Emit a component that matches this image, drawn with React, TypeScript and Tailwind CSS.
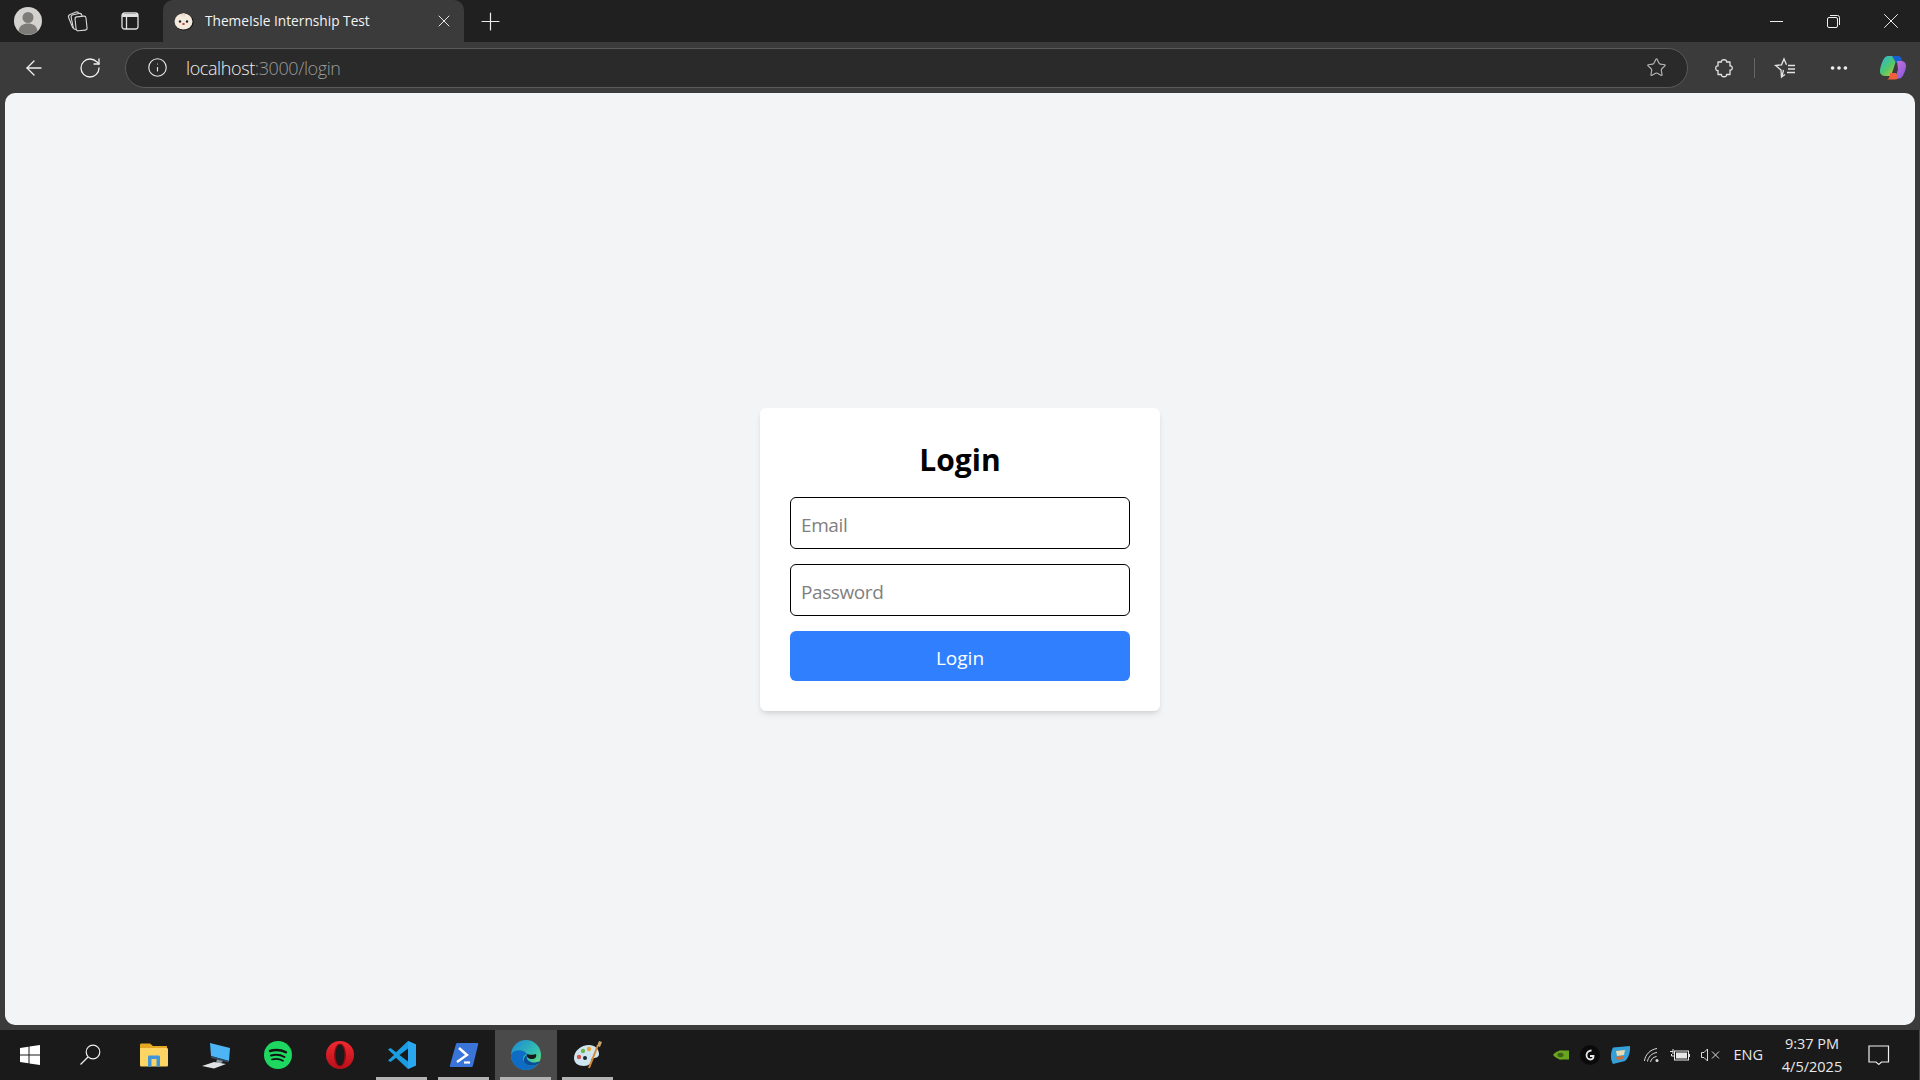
import { ArrowLeft, Ellipsis, Info, Plus, RotateCw, Star, X } from 'lucide-react';

const UI_FONT = "font-['Open_Sans','Noto_Sans',sans-serif]";

const Profile = () => (
  <svg width="28" height="28" viewBox="0 0 28 28">
    <circle cx="14" cy="14" r="14" fill="#d3d2ce" />
    <circle cx="14" cy="10.5" r="5.5" fill="#7d7c79" />
    <path d="M4.5 24c1-5.5 4.5-7.5 9.500-7.500s8.500 2 9.500 7.500a14 14 0 0 1-19 0z" fill="#7d7c79" />
  </svg>
);

const Collections = () => (
  <svg width="22" height="22" viewBox="0 0 22 22" fill="#202020" stroke="#d8d8d8" strokeWidth="1.1">
    <rect x="4" y="3" width="11" height="15" rx="2.500" transform="rotate(-22 9 10)" />
    <rect x="6" y="4" width="11" height="15" rx="2.500" transform="rotate(-12 11 11)" />
    <rect x="9.500" y="6.500" width="11" height="14" rx="2" transform="rotate(-6 15 13)" />
  </svg>
);

const TabsIcon = () => (
  <svg width="18" height="18" viewBox="0 0 18 18" fill="none" stroke="#e0e0e0" strokeWidth="1.300">
    <rect x="1" y="1" width="16" height="16" rx="2.500" />
    <path d="M1 3.500h16" strokeWidth="3" />
    <path d="M5.500 5v12" />
  </svg>
);

const Favicon = () => (
  <svg width="20" height="20" viewBox="0 0 20 20">
    <ellipse cx="10" cy="11" rx="9.500" ry="8.500" fill="#111" />
    <ellipse cx="9.500" cy="10.500" rx="9" ry="8" fill="#f3e9dc" />
    <path d="M7 3.500q2.500-2.500 5 0l-1 2H8z" fill="#e8dccb" />
    <circle cx="6" cy="10.500" r="1.200" fill="#222" />
    <circle cx="13" cy="10.500" r="1.200" fill="#222" />
    <ellipse cx="9.500" cy="13" rx="1.400" ry="1" fill="#c8372f" />
  </svg>
);

const Extensions = () => (
  <svg width="20" height="20" viewBox="0 0 20 20" fill="none" stroke="#e4e4e4" strokeWidth="1.300" strokeLinejoin="round">
    <path d="M7.500 4C6.500 1 13.500 1 12.500 4H16V8C19 7 19 13 16 12V16.500H12.500C13.500 19.500 6.500 19.500 7.500 16.500H4V12.500C1 13.500 1 7 4 8V4Z" />
  </svg>
);

const FavoritesIcon = () => (
  <svg width="22" height="22" viewBox="0 0 22 22" fill="none" stroke="#e4e4e4" strokeWidth="1.300">
    <path d="M9.500 13 8 19.500l-.5.500L7 13 1.500 8.500 7.500 7.800 10 2l2.500 5.800" />
    <path d="M7.500 20l3.500-2.500" />
    <path d="M14 8.500h7M14 12h7M13 15.500h8" />
  </svg>
);

const Copilot = () => (
  <svg width="28" height="28" viewBox="0 0 28 28">
    <defs>
      <linearGradient id="copilot-left" x1="0" y1="0" x2="1" y2="1">
        <stop offset="0" stopColor="#2fb5e8" />
        <stop offset="0.5" stopColor="#4fc86a" />
        <stop offset="1" stopColor="#f2c230" />
      </linearGradient>
      <linearGradient id="copilot-right" x1="0" y1="0" x2="1" y2="1">
        <stop offset="0" stopColor="#d86fd8" />
        <stop offset="1" stopColor="#7a5ae0" />
      </linearGradient>
    </defs>
    <path d="M9 2h11l-1 2c-1.500 1-3 6-4 9l-3 9H7c-4 0-6.500-2-6-6 .6-4 3-11 5-12.500C6.800 2.500 8 2 9 2z" fill="url(#copilot-left)" />
    <path d="M13 2h6c2 0 3 1 3.500 3l1 4H17z" fill="#1a5fd0" />
    <path d="M18 7h4c3 0 5.500 2 5 6-.6 4-2.500 8-4 10-1 1-2 1.500-3.500 1.500H15c2-2 3-6 4-9z" fill="url(#copilot-right)" />
    <path d="M11 19h6l2 4.500c.4 1-1 2-3 2H8c2 0 3-4 3-6.500z" fill="#f0603a" />
  </svg>
);

const WindowsLogo = () => (
  <svg width="20" height="20" viewBox="0 0 20 20" fill="#fff">
    <path d="M0 3l8.500-1.200v7.700H0zM9.500 1.600 20 0v9.500H9.500zM0 10.500h8.500v7.700L0 17zM9.500 10.500H20V20L9.500 18.400z" />
  </svg>
);

const SearchGlass = () => (
  <svg width="22" height="22" viewBox="0 0 22 22" fill="none" stroke="#eeeeee" strokeWidth="1.200">
    <circle cx="14" cy="8" r="6.800" />
    <path d="M9 13 1.500 20.500" />
  </svg>
);

const FolderIcon = () => (
  <svg width="28" height="24" viewBox="0 0 28 24">
    <path d="M0 2c0-1 .5-1.500 1.500-1.500H10L13 3h14v3H0z" fill="#e5a823" />
    <path d="M0 5h26.500c1 0 1.500.5 1.500 1.500V22c0 1-.5 1.500-1.500 1.500h-25C.5 23.500 0 23 0 22z" fill="#fcd565" />
    <path d="M8 23.500V14c0-1 .5-1.500 1.500-1.500h9c1 0 1.500.5 1.500 1.500v9.500h-3.500V16h-5v7.500z" fill="#3f96db" />
  </svg>
);

const ThisPc = () => (
  <svg width="28" height="28" viewBox="0 0 28 28">
    <path d="M8 2l20 5-1 13-18-5z" fill="#4db5f5" />
    <path d="M27 20 9 15v2l17 4.500z" fill="#31495c" />
    <path d="M15 18.500l6 1.500-2 2.500-5-1z" fill="#8a99a5" />
    <path d="M0 25l12-4 12 2-12 4.500z" fill="#dfe3e6" />
  </svg>
);

const Spotify = () => (
  <svg width="28" height="28" viewBox="0 0 28 28" fill="none">
    <circle cx="14" cy="14" r="14" fill="#1ed760" />
    <path d="M6 10c5-1.500 11-1.200 16 1.300" stroke="#121212" strokeWidth="2.400" strokeLinecap="round" />
    <path d="M7 14.500c4.500-1.200 9.500-.8 13.500 1.500" stroke="#121212" strokeWidth="2" strokeLinecap="round" />
    <path d="M8 18.500c3.800-1 7.800-.6 11 1.300" stroke="#121212" strokeWidth="1.700" strokeLinecap="round" />
  </svg>
);

const Opera = () => (
  <svg width="30" height="30" viewBox="0 0 30 30">
    <defs>
      <linearGradient id="opera-red" x1="0" y1="0" x2="0" y2="1">
        <stop offset="0" stopColor="#f02a30" />
        <stop offset="1" stopColor="#b80f1a" />
      </linearGradient>
    </defs>
    <circle cx="15" cy="15" r="14" fill="url(#opera-red)" />
    <ellipse cx="15" cy="15" rx="6" ry="11.500" fill="#8f0a14" />
    <ellipse cx="15" cy="15" rx="4.500" ry="10.500" fill="#1a1a1a" />
  </svg>
);

const VsCode = () => (
  <svg width="30" height="30" viewBox="0 0 30 30">
    <path d="M21 1l8 3.500v21L21 29 9 17.800l-5.500 4.200L1 20.500 7 15 1 9.500 3.500 8 9 12.200z" fill="#1b9de2" />
    <path d="M21 8.500 12.500 15l8.500 6.500z" fill="#1a1a1a" />
    <path d="M21 1l8 3.500v21L21 29z" fill="#2aa7ee" />
  </svg>
);

const PowerShell = () => (
  <svg width="30" height="26" viewBox="0 0 30 26" fill="none">
    <path d="M7 2q.3-1 1.500-1H28q1.500 0 1.200 1.200L24 23.500q-.4 1.500-1.800 1.500H2q-1.500 0-1.200-1.300z" fill="#3b74d8" />
    <path d="M10 6l8 7-10 7" stroke="#fff" strokeWidth="2.400" />
    <path d="M15 20.500h6" stroke="#fff" strokeWidth="2.200" />
  </svg>
);

const Edge = () => (
  <svg width="30" height="30" viewBox="0 0 30 30">
    <defs>
      <linearGradient id="edge-top" x1="0" y1="0" x2="1" y2="1">
        <stop offset="0" stopColor="#1b87d6" />
        <stop offset="0.6" stopColor="#35c1b0" />
        <stop offset="1" stopColor="#7de85c" />
      </linearGradient>
    </defs>
    <circle cx="15" cy="15" r="15" fill="url(#edge-top)" />
    <path d="M0 15c0 9 7 15 15 15 5 0 9-2 12-6-5 3-12 2-14-2-2-3-1-7 3-8-2-3-7-5-12-3-2 1-4 2-4 4z" fill="#0e6cc4" />
    <path d="M13 22c2 4 9 5 14 2 1-1 1.500-2 2-3-3 1.500-7 2-9 1-3-1-5-3-4-7-2 1-4 4-3 7z" fill="#0b4d9c" />
    <path d="M16 14c2 1 7 1 9 0 1 3-1 5-4 5s-6-2-5-5z" fill="#1a1a1a" />
  </svg>
);

const PaintIcon = () => (
  <svg width="30" height="30" viewBox="0 0 30 30">
    <path d="M1 18C1 11 8 5 16 5c6 0 10 4 10 9 0 3-3 4-5 4s-3 1-3 3-2 5-7 5c-6 0-10-3-10-8z" fill="#cfe6f0" />
    <circle cx="6" cy="17" r="2.200" fill="#d9534a" />
    <circle cx="10" cy="11" r="2.200" fill="#6db654" />
    <circle cx="16" cy="9" r="2.200" fill="#e9a33a" />
    <circle cx="12" cy="18" r="2" fill="#1c2a33" />
    <path d="M25 5 16 28" stroke="#d9882f" strokeWidth="2" />
    <path d="M24 6l2-5 3 1-2 5z" fill="#c9a26b" />
  </svg>
);

const TrayChip = () => (
  <svg width="16" height="12" viewBox="0 0 16 12">
    <rect x="6" y="1.500" width="10" height="9" fill="#6aa51f" />
    <path d="M0 6q4-5 10-4v8Q4 11 0 6z" fill="#6aa51f" />
    <ellipse cx="7.500" cy="6" rx="3" ry="2.200" fill="#3c6410" />
  </svg>
);

const LogitechG = () => (
  <svg width="20" height="20" viewBox="0 0 20 20" fill="none">
    <circle cx="10" cy="10" r="10" fill="#0a0a0a" />
    <path d="M11.500 5.500a5 5 0 0 0-5 4.500c0 2.500 1.800 4.500 4 4.500s3-1.500 3-3.500h-3.500" stroke="#e8e8e8" strokeWidth="1.800" />
  </svg>
);

const TrayApp = () => (
  <svg width="20" height="18" viewBox="0 0 20 18">
    <path d="M3 1.500 20 0c.5 6-1.500 12-5 15L3 18C0 13 .5 6 3 1.500z" fill="#35a0d8" />
    <path d="M6 5l9-1-1 5-7 1z" fill="#e8d9b0" />
    <path d="M6 11l7-1 0 3-6 1z" fill="#d96a2f" />
  </svg>
);

const Wifi = () => (
  <svg width="16" height="16" viewBox="0 0 16 16" fill="none" stroke="#dcdcdc" strokeWidth="1">
    <path d="M.500 14C1 8 6 2.500 13 1.500M3.500 14.500C4 10.500 7.500 6 13 5.500M6.500 15c.5-2.500 2.500-5 6-5.500" />
    <circle cx="13" cy="13.500" r="1.500" fill="#dcdcdc" stroke="none" />
  </svg>
);

const Battery = () => (
  <svg width="20" height="14" viewBox="0 0 20 14" fill="none">
    <path d="M0 3.500h3M3 1v5M1.500 6v2H5" stroke="#e8e8e8" strokeWidth="1" />
    <rect x="4.500" y="3" width="14" height="9" stroke="#e8e8e8" />
    <rect x="6" y="4.500" width="11" height="6" fill="#e8e8e8" />
    <path d="M19 6h1v3h-1z" fill="#e8e8e8" />
  </svg>
);

const Muted = () => (
  <svg width="20" height="14" viewBox="0 0 20 14" fill="none" stroke="#dcdcdc" strokeWidth="1">
    <path d="M.500 4.500h2.500L6.500 1v12L3 9.500H.500z" />
    <path d="M11 3.500l7 7M18 3.500l-7 7" />
  </svg>
);

const Notification = () => (
  <svg width="22" height="20" viewBox="0 0 22 20" fill="none" stroke="#f0f0f0" strokeWidth="1.200">
    <path d="M1 1h19.500v16h-7l-2.700 2.400L8 17H1z" />
  </svg>
);

const TaskbarSlot = ({ children, active, open }: { children: React.ReactNode; active?: boolean; open?: boolean }) => (
  <div
    className={`relative flex h-full w-[62px] items-center justify-center ${active ? 'bg-[#4a4a4a]' : ''}`}
  >
    {children}
    {open && <div className="absolute bottom-0 left-[5px] h-[3px] w-[51px] bg-[#b3b3b3]" />}
  </div>
);

export default function App() {
  return (
    <div className={`flex h-screen w-full flex-col overflow-hidden bg-[#3b3b3b] ${UI_FONT}`}>
      {/* tab strip */}
      <div className="flex h-[42px] shrink-0 items-center bg-[#202020]">
        <div className="ml-[14px] flex w-[28px] justify-center">
          <Profile />
        </div>
        <div className="ml-[24px] flex w-[22px] justify-center">
          <Collections />
        </div>
        <div className="ml-[33px] flex w-[18px] justify-center">
          <TabsIcon />
        </div>
        <div className="ml-[24px] flex h-full w-[301px] items-center rounded-t-[10px] bg-[#3b3b3b] pr-[10px] pl-[8px]">
          <div className="ml-[3px] flex">
            <Favicon />
          </div>
          <span className="ml-[11px] flex-1 text-[13.7px] leading-none text-[#f4f4f4]">ThemeIsle Internship Test</span>
          <X size={20} strokeWidth={1.2} className="text-[#e8e8e8]" />
        </div>
        <Plus size={29} strokeWidth={1} className="ml-[12px] text-[#ececec]" />
        <div className="ml-auto flex h-full items-center">
          <svg width="13" height="1" viewBox="0 0 13 1" className="mr-[44px]">
            <path d="M0 .5h13" stroke="#f0f0f0" />
          </svg>
          <svg width="13" height="13" viewBox="0 0 13 13" fill="none" stroke="#f0f0f0" className="mr-[38px]">
            <rect x=".5" y="2.500" width="10" height="10" rx="1.500" />
            <path d="M3 .5h7.500a2 2 0 0 1 2 2V10" />
          </svg>
          <X size={26} strokeWidth={0.9} className="mr-[16px] text-[#f0f0f0]" />
        </div>
      </div>

      {/* toolbar */}
      <div className="flex h-[51px] shrink-0 items-center bg-[#3b3b3b]">
        <ArrowLeft size={24} strokeWidth={1.3} className="ml-[22px] text-[#f0f0f0]" />
        <RotateCw size={24} strokeWidth={1.3} className="ml-[32px] text-[#f0f0f0]" />
        <div className="ml-[23px] flex h-[40px] w-[1563px] items-center rounded-full border border-[#5a5a5a] bg-[#2a2a2a] pr-[20px] pl-[21px]">
          <Info size={21} strokeWidth={1.3} className="text-[#e8e8e8]" />
          <span className="ml-[18px] text-[18px] leading-none font-light tracking-[-0.4px] text-[#f0f0f0]">
            localhost<span className="text-[#9a9a9a]">:3000/login</span>
          </span>
          <Star size={21} strokeWidth={1.3} className="ml-auto text-[#b5b5b5]" />
        </div>
        <div className="ml-[26px] flex">
          <Extensions />
        </div>
        <div className="ml-[20px] h-[20px] w-[1px] bg-[#666666]" />
        <div className="ml-[19px] flex">
          <FavoritesIcon />
        </div>
        <Ellipsis size={22} strokeWidth={2} className="ml-[32px] text-[#f0f0f0]" />
        <div className="ml-[29px] flex">
          <Copilot />
        </div>
      </div>

      {/* page */}
      <div className="mx-[5px] flex min-h-0 flex-1 items-center justify-center rounded-[10px] bg-[#f3f4f6]">
        <div className="w-[400px] rounded-md bg-white p-[30px] shadow-md">
          <h1 className="mb-[16px] text-center text-[30px] leading-[43px] font-bold text-black">Login</h1>
          <div className="flex flex-col gap-[15px]">
            <input
              placeholder="Email"
              className="h-[52px] w-full rounded-md border border-black bg-white px-[10px] pt-[5px] text-[19px] tracking-[-0.4px] outline-none placeholder:text-[#7f7f7f]"
            />
            <input
              placeholder="Password"
              className="h-[52px] w-full rounded-md border border-black bg-white px-[10px] pt-[5px] text-[19px] tracking-[-0.4px] outline-none placeholder:text-[#7f7f7f]"
            />
            <button className="h-[50px] w-full rounded-md bg-[#2f7fff] pt-[5px] text-[19px] text-white">Login</button>
          </div>
        </div>
      </div>

      {/* taskbar */}
      <div className="mt-[5px] flex h-[50px] shrink-0 items-center bg-[#1a1a1a]">
        <div className="flex h-full w-[60px] items-center justify-center">
          <WindowsLogo />
        </div>
        <div className="flex h-full w-[60px] items-center justify-center">
          <SearchGlass />
        </div>
        <div className="ml-[3px] flex h-full items-center">
          <TaskbarSlot>
            <FolderIcon />
          </TaskbarSlot>
          <TaskbarSlot>
            <ThisPc />
          </TaskbarSlot>
          <TaskbarSlot>
            <Spotify />
          </TaskbarSlot>
          <TaskbarSlot>
            <Opera />
          </TaskbarSlot>
          <TaskbarSlot open>
            <VsCode />
          </TaskbarSlot>
          <TaskbarSlot open>
            <PowerShell />
          </TaskbarSlot>
          <TaskbarSlot active open>
            <Edge />
          </TaskbarSlot>
          <TaskbarSlot open>
            <PaintIcon />
          </TaskbarSlot>
        </div>

        <div className="ml-auto flex h-full items-center">
          <TrayChip />
          <div className="ml-[11px] flex">
            <LogitechG />
          </div>
          <div className="ml-[10px] flex">
            <TrayApp />
          </div>
          <div className="ml-[14px] flex">
            <Wifi />
          </div>
          <div className="ml-[10px] flex">
            <Battery />
          </div>
          <div className="ml-[11px] flex">
            <Muted />
          </div>
          <span className="ml-[12px] text-[14.5px] text-[#e8e8e8]">ENG</span>
          <div className="ml-[19px] flex w-[60px] flex-col items-center text-[14.5px] leading-[23px] text-[#e8e8e8]">
            <span>9:37 PM</span>
            <span>4/5/2025</span>
          </div>
          <div className="ml-[26px] flex">
            <Notification />
          </div>
          <div className="ml-[29px] h-full w-[1px] bg-[#4a4a4a]" />
        </div>
      </div>
    </div>
  );
}
